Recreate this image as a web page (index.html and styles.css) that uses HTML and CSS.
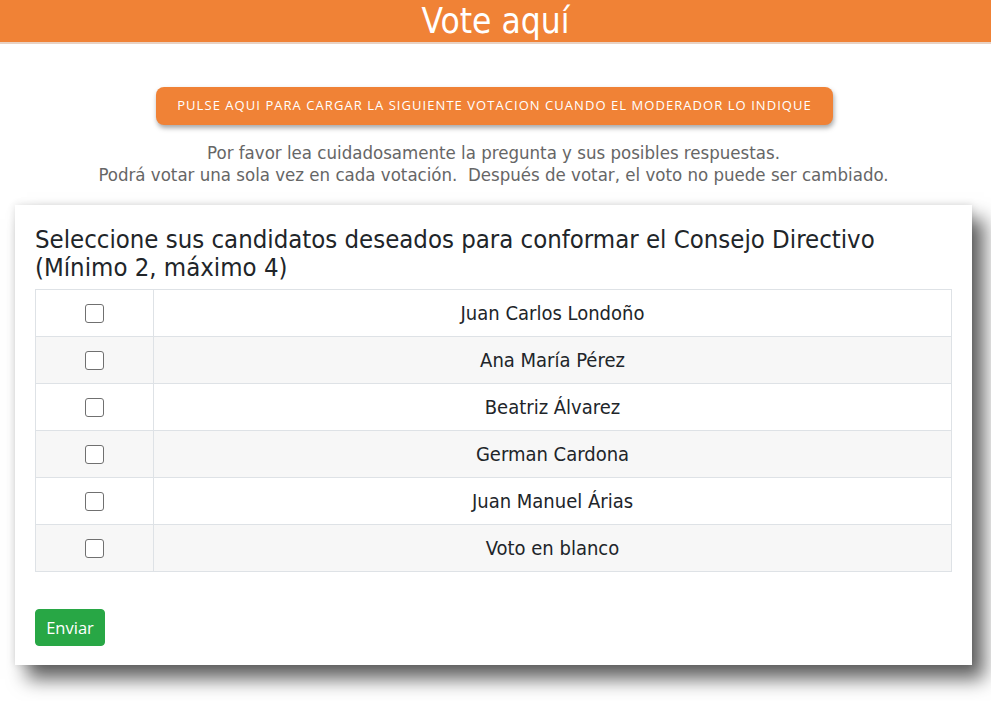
FILE: index.html
```html
<!DOCTYPE html>
<html lang="es">
<head>
<meta charset="utf-8">
<title>Vote aquí</title>
<link rel="stylesheet" href="styles.css">
</head>
<body>
<header class="topbar"><h1 class="topbar-title">Vote aquí</h1></header>
<main class="page">
  <div class="load-wrap">
    <button class="load-btn" type="button">Pulse aqui para cargar la siguiente votacion cuando el moderador lo indique</button>
  </div>
  <p class="intro">Por favor lea cuidadosamente la pregunta y sus posibles respuestas.<br>Podrá votar una sola vez en cada votación.&nbsp; Después de votar, el voto no puede ser cambiado.</p>
  <section class="card">
    <h2 class="question">Seleccione sus candidatos deseados para conformar el Consejo Directivo (Mínimo 2, máximo 4)</h2>
    <table class="options">
      <tbody>
        <tr><td class="check-cell"><input type="checkbox"></td><td class="name-cell">Juan Carlos Londoño</td></tr>
        <tr><td class="check-cell"><input type="checkbox"></td><td class="name-cell">Ana María Pérez</td></tr>
        <tr><td class="check-cell"><input type="checkbox"></td><td class="name-cell">Beatriz Álvarez</td></tr>
        <tr><td class="check-cell"><input type="checkbox"></td><td class="name-cell">German Cardona</td></tr>
        <tr><td class="check-cell"><input type="checkbox"></td><td class="name-cell">Juan Manuel Árias</td></tr>
        <tr><td class="check-cell"><input type="checkbox"></td><td class="name-cell">Voto en blanco</td></tr>
      </tbody>
    </table>
    <button class="send-btn" type="button">Enviar</button>
  </section>
</main>
</body>
</html>
```
FILE: styles.css
```css
* { box-sizing: border-box; }
html, body { margin: 0; padding: 0; background: #fff; }
body {
  font-family: "DejaVu Sans Condensed", "DejaVu Sans", sans-serif;
  color: #212529;
}
.topbar {
  height: 44px;
  background: #f08236;
  border-bottom: 2px solid #e8d2c4;
  display: flex;
  justify-content: center;
  align-items: center;
}
.topbar-title {
  margin: 0;
  color: #fff;
  font-weight: normal;
  font-size: 35px;
  line-height: 42px;
}
.page {
  padding: 0 19px 36px 15px;
}
.load-wrap {
  display: flex;
  justify-content: center;
  padding-top: 43px;
}
.load-btn {
  width: 677px;
  height: 38px;
  margin-left: 2px;
  border: none;
  border-radius: 8px;
  background: #f08236;
  color: #fff;
  font-family: "Open Sans", sans-serif;
  font-size: 13px;
  letter-spacing: 1.05px;
  text-transform: uppercase;
  box-shadow: 1px 3px 5px rgba(0,0,0,0.35);
  padding: 0 0 3px;
}
.intro {
  margin: 17px 0 0;
  text-align: center;
  color: #666;
  font-size: 18.5px;
  line-height: 22px;
}
.card {
  margin-top: 19px;
  background: #fff;
  padding: 20px 20px 20px;
  box-shadow: 0 0 8px rgba(0,0,0,0.12), 12px 14px 18px rgba(0,0,0,0.62);
  height: 460px;
}
.question {
  margin: 0 0 8px;
  font-weight: normal;
  font-size: 25.5px;
  line-height: 28px;
  color: #212529;
}
.options {
  width: 100%;
  border-collapse: collapse;
  border: 1px solid #dee2e6;
}
.options td {
  border: 1px solid #dee2e6;
  height: 47px;
  padding: 0;
  vertical-align: middle;
}
.options tr:nth-child(even) td { background: #f7f7f7; }
.check-cell {
  width: 118px;
  text-align: center;
}
.check-cell input {
  appearance: none;
  -webkit-appearance: none;
  margin: 0;
  width: 19px;
  height: 19px;
  border: 1.5px solid #707070;
  border-radius: 3px;
  background: #fff;
  vertical-align: middle;
}
.name-cell {
  text-align: center;
  font-size: 20px;
}
.send-btn {
  margin-top: 37px;
  width: 70px;
  height: 37px;
  border: 1px solid #28a745;
  border-radius: 4px;
  background: #28a745;
  color: #fff;
  font-family: "Open Sans", sans-serif;
  font-size: 16.5px;
  font-weight: 500;
  padding: 0;
}
```
